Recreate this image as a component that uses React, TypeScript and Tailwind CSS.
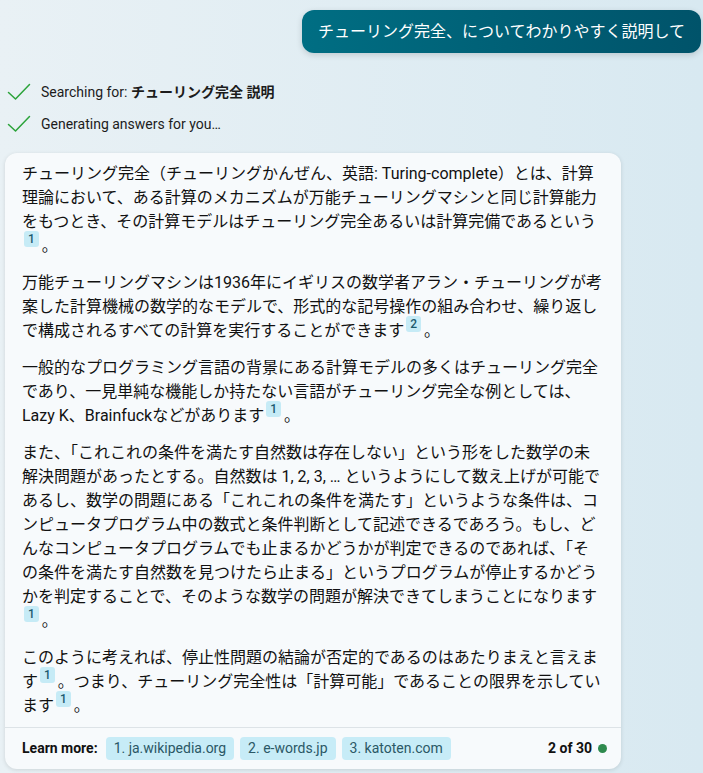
import React from "react";

function Cite({ n }: { n: number }) {
    return (
        <span className="inline-block align-top relative top-[-3px] ml-[2px] mr-[3px] px-[4px] rounded-[3px] bg-[#c6ebf6] text-[#1b5a6e] text-[12px] leading-[16px] font-medium">
            {n}
        </span>
    );
}

function Check() {
    return (
        <svg width="24" height="18" viewBox="0 0 24 18" fill="none" className="shrink-0">
            <path d="M1.5 9.5 L8.5 16 L22.5 1.5" stroke="#2ba33a" strokeWidth="1.5" strokeLinecap="round" strokeLinejoin="round" />
        </svg>
    );
}

export default function App() {
    return (
        <div
            className="min-h-[773px] w-full bg-gradient-to-r from-[#e9f1f5] to-[#d8e9f1] text-[#111] overflow-hidden"
            style={{ fontFamily: 'Roboto, "Noto Sans CJK JP", sans-serif' }}
        >
            <div className="flex justify-end pt-[10px] pr-[2px]">
                <div className="h-[43px] flex items-center px-[16px] rounded-[12px] bg-gradient-to-r from-[#006e83] to-[#00536a] text-white text-[16px] shadow-[0_2px_6px_rgba(0,0,0,0.15)]">
                    チューリング完全、についてわかりやすく説明して
                </div>
            </div>

            <div className="flex flex-col gap-[14px] mt-[30px] pl-[7px] text-[14px] text-[#1c1c1c]">
                <div className="flex items-center gap-[10px] h-[18px]">
                    <Check />
                    <span>
                        Searching for: <b className="font-bold">チューリング完全 説明</b>
                    </span>
                </div>
                <div className="flex items-center gap-[10px] h-[18px]">
                    <Check />
                    <span>Generating answers for you…</span>
                </div>
            </div>

            <div className="ml-[5px] mt-[20px] w-[616px] rounded-[12px] bg-[#f7fafc] shadow-[0_1px_4px_rgba(0,0,0,0.12)]">
                <div className="flex flex-col gap-[13px] pl-[17px] pr-[19px] pt-[9px] pb-[9px] text-[16px] leading-[24px]">
                    <p>
                        チューリング完全（チューリングかんぜん、英語: Turing-complete）とは、計算理論において、ある計算のメカニズムが万能チューリングマシンと同じ計算能力をもつとき、その計算モデルはチューリング完全あるいは計算完備であるという<Cite n={1} />。
                    </p>
                    <p>
                        万能チューリングマシンは1936年にイギリスの数学者アラン・チューリングが考案した計算機械の数学的なモデルで、形式的な記号操作の組み合わせ、繰り返しで構成されるすべての計算を実行することができます<Cite n={2} />。
                    </p>
                    <p>
                        一般的なプログラミング言語の背景にある計算モデルの多くはチューリング完全であり、一見単純な機能しか持たない言語がチューリング完全な例としては、Lazy K、Brainfuckなどがあります<Cite n={1} />。
                    </p>
                    <p>
                        また、「これこれの条件を満たす自然数は存在しない」という形をした数学の未解決問題があったとする。自然数は 1, 2, 3, … というようにして数え上げが可能であるし、数学の問題にある「これこれの条件を満たす」というような条件は、コンピュータプログラム中の数式と条件判断として記述できるであろう。もし、どんなコンピュータプログラムでも止まるかどうかが判定できるのであれば、「その条件を満たす自然数を見つけたら止まる」というプログラムが停止するかどうかを判定することで、そのような数学の問題が解決できてしまうことになります<Cite n={1} />。
                    </p>
                    <p>
                        このように考えれば、停止性問題の結論が否定的であるのはあたりまえと言えます<Cite n={1} />。つまり、チューリング完全性は「計算可能」であることの限界を示しています<Cite n={1} />。
                    </p>
                </div>
                <div className="flex items-center h-[42px] border-t border-[#dde3e7] pl-[17px] pr-[14px] text-[14px]">
                    <span className="font-bold mr-[8px]">Learn more:</span>
                    <div className="flex gap-[6px]">
                        <span className="px-[8px] h-[23px] flex items-center rounded-[4px] bg-[#c7ecf7] text-[#2b5866]">1. ja.wikipedia.org</span>
                        <span className="px-[8px] h-[23px] flex items-center rounded-[4px] bg-[#c7ecf7] text-[#2b5866]">2. e-words.jp</span>
                        <span className="px-[8px] h-[23px] flex items-center rounded-[4px] bg-[#c7ecf7] text-[#2b5866]">3. katoten.com</span>
                    </div>
                    <span className="ml-auto font-bold">2 of 30</span>
                    <span className="ml-[6px] w-[9px] h-[9px] rounded-full bg-[#2e8a4e]" />
                </div>
            </div>
        </div>
    );
}
